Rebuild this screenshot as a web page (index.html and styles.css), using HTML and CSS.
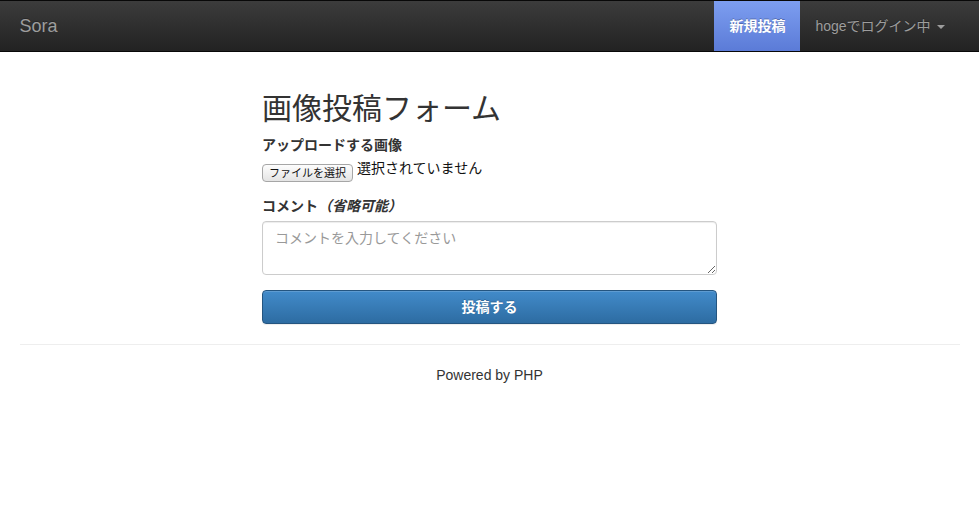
FILE: index.html
```html
<!DOCTYPE html>
<html lang="ja">
<head>
<meta charset="utf-8">
<title>Sora</title>
<link rel="stylesheet" href="styles.css">
</head>
<body>
<nav class="navbar">
  <div class="container navbar-inner">
    <a class="brand" href="#">Sora</a>
    <ul class="nav-right">
      <li><a class="nav-link active" href="#">新規投稿</a></li>
      <li><a class="nav-link" href="#">hogeでログイン中 <span class="caret"></span></a></li>
    </ul>
  </div>
</nav>
<main class="container main">
  <div class="col">
    <h2 class="title">画像投稿フォーム</h2>
    <form class="form">
      <div class="form-group">
        <label class="label" for="image">アップロードする画像</label>
        <div class="file-row">
          <label class="file-btn" for="image">ファイルを選択</label>
          <span class="file-status">選択されていません</span>
          <input class="file-input" type="file" id="image">
        </div>
      </div>
      <div class="form-group">
        <label class="label" for="comment">コメント<em class="optional">（省略可能）</em></label>
        <textarea class="textarea" id="comment" rows="2" placeholder="コメントを入力してください"></textarea>
      </div>
      <button class="btn-primary" type="button">投稿する</button>
    </form>
  </div>
  <hr class="divider">
  <footer class="footer">Powered by PHP</footer>
</main>
</body>
</html>
```
FILE: styles.css
```css
* { box-sizing: border-box; }
html, body { margin: 0; padding: 0; }
body {
  font-family: "Liberation Sans", "Noto Sans CJK JP", Arial, sans-serif;
  font-size: 14px;
  line-height: 20px;
  color: #333;
  background: #fff;
}
.container {
  width: 970px;
  margin: 0 auto;
  padding: 0 15px;
}
.main { display: flow-root; }
.navbar {
  height: 52px;
  border-top: 1px solid #080808;
  border-bottom: 1px solid #080808;
  background: linear-gradient(to bottom, #3c3c3c 0, #222 100%);
  margin-bottom: 20px;
}
.navbar-inner {
  display: flex;
  justify-content: space-between;
  height: 50px;
}
.brand {
  margin-left: -15px;
  padding: 15px;
  font-size: 18px;
  line-height: 20px;
  color: #9d9d9d;
  text-decoration: none;
  text-shadow: 0 -1px 0 rgba(0,0,0,.25);
}
.nav-right {
  display: flex;
  list-style: none;
  margin: 0;
  padding: 0;
}
.nav-link {
  display: block;
  padding: 15px;
  line-height: 20px;
  height: 50px;
  color: #9d9d9d;
  text-decoration: none;
  text-shadow: 0 -1px 0 rgba(0,0,0,.25);
}
.nav-link.active {
  color: #fff;
  font-weight: bold;
  background: linear-gradient(to bottom, #7d9ef0 0, #5b7bd7 100%);
}
.caret {
  display: inline-block;
  width: 0;
  height: 0;
  margin-left: 2px;
  vertical-align: middle;
  border-top: 4px solid #9d9d9d;
  border-left: 4px solid transparent;
  border-right: 4px solid transparent;
}
.col {
  width: 455px;
  margin-left: 242.5px;
}
.title {
  font-size: 30px;
  line-height: 33px;
  font-weight: normal;
  margin: 20px 0 10px;
  color: #333;
}
.form { margin: 0; }
.form-group { margin-bottom: 15px; }
.label {
  display: inline-block;
  margin-bottom: 5px;
  font-weight: bold;
}
.optional { font-style: italic; }
.file-row {
  display: flex;
  align-items: flex-start;
  height: 21px;
}
.file-btn {
  margin-top: 4px;
  height: 18px;
  padding: 0 6px;
  font-size: 11px;
  line-height: 16px;
  color: #111;
  border: 1px solid #a6a6a6;
  border-radius: 4px;
  background: linear-gradient(to bottom, #fdfdfd 0, #e4e4e4 100%);
}
.file-status {
  margin-left: 4px;
  margin-top: -2px;
  color: #111;
}
.file-input { display: none; }
.textarea {
  display: block;
  width: 100%;
  height: 54px;
  padding: 6px 12px;
  font-family: inherit;
  font-size: 14px;
  line-height: 20px;
  color: #555;
  border: 1px solid #ccc;
  border-radius: 4px;
  box-shadow: inset 0 1px 1px rgba(0,0,0,.075);
  resize: vertical;
}
.textarea::placeholder { color: #999; }
.btn-primary {
  display: block;
  width: 100%;
  height: 34px;
  margin: 0;
  padding: 6px 12px;
  font-family: inherit;
  font-size: 14px;
  font-weight: bold;
  line-height: 20px;
  color: #fff;
  text-shadow: 0 -1px 0 rgba(0,0,0,.2);
  border: 1px solid #245580;
  border-radius: 4px;
  background: linear-gradient(to bottom, #428bca 0, #2d6ca2 100%);
  box-shadow: inset 0 1px 0 rgba(255,255,255,.15), 0 1px 1px rgba(0,0,0,.075);
}
.divider {
  margin: 20px 0;
  border: 0;
  border-top: 1px solid #eee;
}
.footer {
  text-align: center;
}
```
